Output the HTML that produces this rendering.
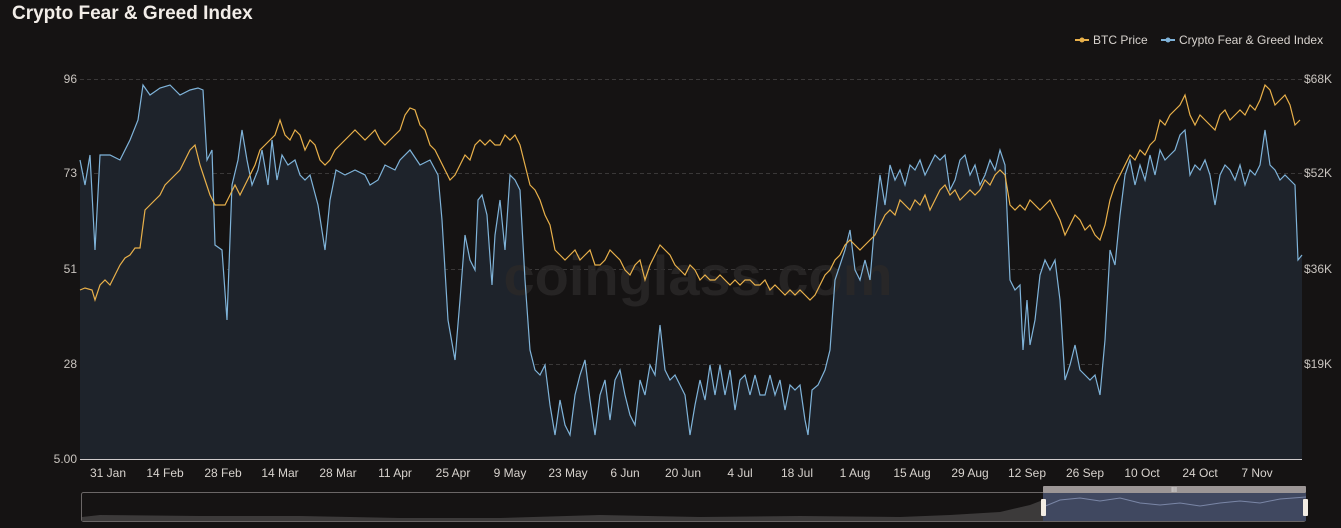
<!DOCTYPE html>
<html><head><meta charset="utf-8">
<style>
html,body{margin:0;padding:0;background:#151313;width:1341px;height:528px;overflow:hidden;font-family:"Liberation Sans",sans-serif}
</style></head>
<body>
<svg width="1341" height="528" xmlns="http://www.w3.org/2000/svg" style="position:absolute;left:0;top:0">
<rect width="1341" height="528" fill="#151313"/>
<text x="12" y="19" font-size="19" font-weight="bold" fill="#f2ede8" font-family="Liberation Sans">Crypto Fear &amp; Greed Index</text>
<!-- legend -->
<line x1="1075" y1="40" x2="1089" y2="40" stroke="#e8b04a" stroke-width="2"/><circle cx="1082" cy="40" r="2.5" fill="#e8b04a"/>
<text x="1093" y="44" font-size="12" fill="#d8d3ce">BTC Price</text>
<line x1="1161" y1="40" x2="1175" y2="40" stroke="#7fb3d9" stroke-width="2"/><circle cx="1168" cy="40" r="2.5" fill="#7fb3d9"/>
<text x="1179" y="44" font-size="12" fill="#d8d3ce">Crypto Fear &amp; Greed Index</text>
<!-- grid -->
<g stroke="#3a3838" stroke-dasharray="4,3" stroke-width="1">
<line x1="80" y1="79.5" x2="1302" y2="79.5"/><line x1="80" y1="173.5" x2="1302" y2="173.5"/>
<line x1="80" y1="269.5" x2="1302" y2="269.5"/><line x1="80" y1="364.5" x2="1302" y2="364.5"/>
</g>
<g font-size="12" fill="#c9c4bf">
<text x="77" y="83" text-anchor="end">96</text><text x="77" y="177" text-anchor="end">73</text>
<text x="77" y="273" text-anchor="end">51</text><text x="77" y="368" text-anchor="end">28</text>
<text x="77" y="463" text-anchor="end">5.00</text>
<text x="1304" y="83">$68K</text><text x="1304" y="177">$52K</text><text x="1304" y="273">$36K</text><text x="1304" y="368">$19K</text>
</g>
<!-- fear greed fill -->
<polygon fill="#1e232b" points="80,459 80,160 85,185 90,155 95,250 100,155 110,155 120,160 130,140 138,120 143,85 150,95 160,88 170,85 180,95 190,90 198,88 203,90 207,160 212,150 215,245 222,250 227,320 232,185 238,160 242,130 247,160 252,185 258,170 262,150 268,185 272,140 277,180 282,155 288,165 295,160 300,175 305,180 310,175 318,205 325,250 330,200 336,170 345,175 355,170 365,175 370,185 378,180 385,165 395,170 400,160 410,150 420,165 430,160 438,175 442,220 448,320 455,360 460,300 465,235 470,260 475,270 478,200 482,195 487,215 492,285 495,235 500,200 505,250 510,175 515,180 520,190 525,280 530,350 535,370 540,375 545,365 550,405 555,435 560,400 565,425 570,435 575,395 580,375 585,360 590,400 595,435 600,395 605,380 610,420 615,380 620,370 625,395 630,415 635,425 640,380 645,395 650,365 655,375 660,325 665,370 670,380 675,375 680,385 685,395 690,435 695,405 700,380 705,400 710,365 715,395 720,365 725,395 730,370 735,410 740,380 745,375 750,395 755,375 760,395 765,395 770,375 775,395 780,380 785,410 790,385 795,390 800,385 805,420 808,435 812,390 818,385 825,370 830,350 835,280 840,265 845,250 850,230 855,270 860,280 865,260 870,280 875,220 880,175 885,205 890,165 895,180 900,170 905,185 910,165 915,170 920,160 925,175 930,165 935,155 940,160 945,155 950,190 955,180 960,160 965,155 970,175 975,165 980,185 985,175 990,160 995,170 1000,150 1005,165 1010,280 1015,290 1020,285 1023,350 1027,300 1030,345 1035,320 1040,275 1045,260 1050,270 1055,260 1060,300 1065,380 1070,365 1075,345 1080,370 1085,375 1090,380 1095,375 1100,395 1105,340 1110,250 1115,265 1120,215 1125,175 1130,160 1135,185 1140,165 1145,180 1150,155 1155,175 1160,150 1165,160 1170,155 1175,150 1180,135 1185,130 1190,175 1195,165 1200,170 1205,160 1210,175 1215,205 1220,175 1225,165 1230,170 1235,180 1240,165 1245,185 1250,170 1255,175 1260,165 1265,130 1270,165 1275,170 1280,180 1285,175 1290,180 1295,185 1298,260 1302,255 1302,459"/>
<text x="698" y="295" font-size="56" font-weight="bold" fill="#2a2828" text-anchor="middle" opacity="0.85">coinglass.com</text>
<polyline fill="none" stroke="#7fb3d9" stroke-width="1.2" points="80,160 85,185 90,155 95,250 100,155 110,155 120,160 130,140 138,120 143,85 150,95 160,88 170,85 180,95 190,90 198,88 203,90 207,160 212,150 215,245 222,250 227,320 232,185 238,160 242,130 247,160 252,185 258,170 262,150 268,185 272,140 277,180 282,155 288,165 295,160 300,175 305,180 310,175 318,205 325,250 330,200 336,170 345,175 355,170 365,175 370,185 378,180 385,165 395,170 400,160 410,150 420,165 430,160 438,175 442,220 448,320 455,360 460,300 465,235 470,260 475,270 478,200 482,195 487,215 492,285 495,235 500,200 505,250 510,175 515,180 520,190 525,280 530,350 535,370 540,375 545,365 550,405 555,435 560,400 565,425 570,435 575,395 580,375 585,360 590,400 595,435 600,395 605,380 610,420 615,380 620,370 625,395 630,415 635,425 640,380 645,395 650,365 655,375 660,325 665,370 670,380 675,375 680,385 685,395 690,435 695,405 700,380 705,400 710,365 715,395 720,365 725,395 730,370 735,410 740,380 745,375 750,395 755,375 760,395 765,395 770,375 775,395 780,380 785,410 790,385 795,390 800,385 805,420 808,435 812,390 818,385 825,370 830,350 835,280 840,265 845,250 850,230 855,270 860,280 865,260 870,280 875,220 880,175 885,205 890,165 895,180 900,170 905,185 910,165 915,170 920,160 925,175 930,165 935,155 940,160 945,155 950,190 955,180 960,160 965,155 970,175 975,165 980,185 985,175 990,160 995,170 1000,150 1005,165 1010,280 1015,290 1020,285 1023,350 1027,300 1030,345 1035,320 1040,275 1045,260 1050,270 1055,260 1060,300 1065,380 1070,365 1075,345 1080,370 1085,375 1090,380 1095,375 1100,395 1105,340 1110,250 1115,265 1120,215 1125,175 1130,160 1135,185 1140,165 1145,180 1150,155 1155,175 1160,150 1165,160 1170,155 1175,150 1180,135 1185,130 1190,175 1195,165 1200,170 1205,160 1210,175 1215,205 1220,175 1225,165 1230,170 1235,180 1240,165 1245,185 1250,170 1255,175 1260,165 1265,130 1270,165 1275,170 1280,180 1285,175 1290,180 1295,185 1298,260 1302,255"/>
<polyline fill="none" stroke="#e8b04a" stroke-width="1.2" points="80,290 85,288 92,290 95,300 100,285 105,280 110,285 115,275 120,265 125,258 130,255 135,248 140,248 145,210 150,205 155,200 160,195 165,185 170,180 175,175 180,170 185,160 190,150 195,145 200,165 205,180 210,195 215,205 220,205 225,205 230,195 235,185 240,195 245,185 250,175 255,165 260,150 265,145 270,140 275,135 280,120 285,135 290,140 295,130 300,135 305,150 310,140 315,145 320,160 325,165 330,160 335,150 340,145 345,140 350,135 355,130 360,135 365,140 370,135 375,130 380,140 385,145 390,140 395,135 400,130 405,115 410,108 415,110 420,125 425,130 430,145 435,150 440,160 445,170 450,180 455,175 460,165 465,155 470,160 475,145 480,140 485,145 490,140 495,145 500,145 505,135 510,140 515,135 520,145 525,165 530,185 535,190 540,200 545,215 550,225 555,250 560,255 565,260 570,255 575,250 580,260 585,255 590,250 595,265 600,265 605,260 610,250 615,255 620,260 625,270 630,275 635,265 640,260 645,280 650,265 655,255 660,245 665,250 670,255 675,265 680,270 685,275 690,265 695,270 700,280 705,275 710,280 715,280 720,275 725,280 730,285 735,280 740,285 745,280 750,280 755,285 760,285 765,280 770,290 775,285 780,290 785,295 790,290 795,295 800,290 805,295 810,300 815,295 820,285 825,275 830,270 835,260 840,255 845,245 850,240 855,245 860,250 865,245 870,240 875,235 880,225 885,215 890,210 895,215 900,200 905,205 910,210 915,200 920,205 925,195 930,210 935,200 940,190 945,185 950,195 955,190 960,200 965,195 970,190 975,195 980,190 985,180 990,185 995,175 1000,170 1005,175 1010,205 1015,210 1020,205 1025,210 1030,200 1035,205 1040,210 1045,205 1050,200 1055,210 1060,220 1065,235 1070,225 1075,215 1080,220 1085,230 1090,225 1095,235 1100,240 1105,225 1110,200 1115,185 1120,175 1125,165 1130,155 1135,160 1140,150 1145,155 1150,145 1155,140 1160,120 1165,125 1170,115 1175,110 1180,105 1185,95 1190,115 1195,125 1200,115 1205,120 1210,125 1215,130 1220,115 1225,110 1230,120 1235,115 1240,110 1245,115 1250,105 1255,110 1260,100 1265,85 1270,90 1275,105 1280,100 1285,95 1290,105 1295,125 1300,120"/>
<line x1="80" y1="459.5" x2="1302" y2="459.5" stroke="#d0cccc" stroke-width="1"/>
<g font-size="12" fill="#d8d3ce" text-anchor="middle">
<text x="108" y="477">31 Jan</text><text x="165" y="477">14 Feb</text><text x="223" y="477">28 Feb</text><text x="280" y="477">14 Mar</text><text x="338" y="477">28 Mar</text><text x="395" y="477">11 Apr</text><text x="453" y="477">25 Apr</text><text x="510" y="477">9 May</text><text x="568" y="477">23 May</text><text x="625" y="477">6 Jun</text><text x="683" y="477">20 Jun</text><text x="740" y="477">4 Jul</text><text x="797" y="477">18 Jul</text><text x="855" y="477">1 Aug</text><text x="912" y="477">15 Aug</text><text x="970" y="477">29 Aug</text><text x="1027" y="477">12 Sep</text><text x="1085" y="477">26 Sep</text><text x="1142" y="477">10 Oct</text><text x="1200" y="477">24 Oct</text><text x="1257" y="477">7 Nov</text>
</g>
<!-- slider -->
<rect x="81.5" y="492.5" width="1224" height="29" rx="2" fill="none" stroke="#6a6666"/>
<polygon fill="#3c3a3a" points="82,517 100,515 200,516 300,516 400,518 500,518 600,515 700,517 800,516 900,517 950,515 1000,512 1030,505 1043,500 1043,521 82,521"/>
<rect x="1043" y="493" width="263" height="28" fill="#404860"/>
<polyline fill="none" stroke="#7a86a6" stroke-width="1" points="1043,507 1060,500 1080,498 1100,501 1120,498 1140,503 1160,505 1180,503 1200,506 1220,503 1240,501 1260,503 1280,499 1306,497"/>
<rect x="1043" y="486" width="263" height="7" rx="1" fill="#9c9696"/>
<text x="1174" y="492" font-size="7" fill="#eee" text-anchor="middle">III</text>
<rect x="1041" y="499" width="5" height="17" rx="1" fill="#f3ede4"/>
<rect x="1303" y="499" width="5" height="17" rx="1" fill="#f3ede4"/>
</svg>
</body></html>
